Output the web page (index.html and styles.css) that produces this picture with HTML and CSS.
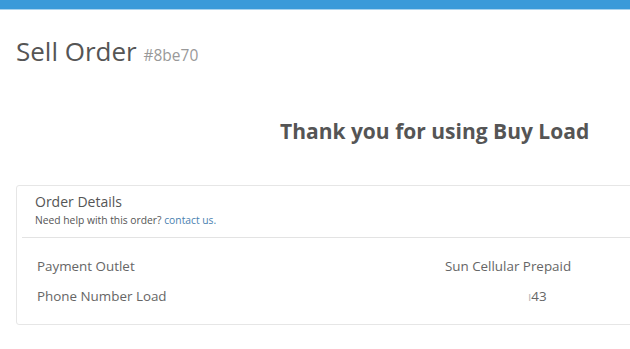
FILE: index.html
```html
<!DOCTYPE html>
<html>
<head>
<meta charset="utf-8">
<link rel="stylesheet" href="styles.css">
</head>
<body>
<div class="topbar"></div>
<div class="page">
  <h1 class="title">Sell Order <small class="order-id">#8be70</small></h1>
  <h2 class="thanks">Thank you for using Buy Load</h2>
  <div class="card">
    <div class="card-head">
      <div class="card-title">Order Details</div>
      <div class="card-sub">Need help with this order? <a class="link" href="#">contact us.</a></div>
    </div>
    <div class="card-body">
      <div class="row"><span class="label">Payment Outlet</span><span class="value">Sun Cellular Prepaid</span></div>
      <div class="row"><span class="label">Phone Number Load</span><span class="value"><span class="redact">0922xxxx</span><span class="partial">ı</span>43</span></div>
    </div>
  </div>
</div>
</body>
</html>
```
FILE: styles.css
```css
html, body { margin: 0; padding: 0; background: #fff; }
body { font-family: "Open Sans", "Liberation Sans", sans-serif; color: #555; width: 630px; height: 349px; overflow: hidden; }
.topbar { height: 9px; background: #3a9ad9; border-bottom: 1px solid #a9d3ee; }
.page { padding: 0 0 0 16px; overflow: hidden; }
.title { margin: 23px 0 0 0; font-size: 26px; font-weight: 400; line-height: 36px; color: #555; }
.order-id { font-size: 15.5px; color: #999; font-weight: 400; }
.thanks { margin: 44px 0 0 0; font-size: 21px; font-weight: 700; color: #555; line-height: 28px; padding-left: 264px; white-space: nowrap; }
.card { margin-top: 40px; border: 1px solid #e6e6e6; border-radius: 3px; width: 720px; height: 140px; box-sizing: border-box; }
.card-head { margin-left: 5px; padding: 6px 0 9px 13px; border-bottom: 1px solid #e3e3e3; }
.card-title { font-size: 14px; line-height: 20px; color: #555; }
.card-sub { font-size: 10.3px; line-height: 16px; color: #555; }
.link { color: #4a7fb0; text-decoration: none; }
.card-body { padding: 13px 0 0 20px; }
.row { display: flex; font-size: 13.4px; line-height: 30px; color: #666; }
.label { width: 371px; flex: none; }
.value { width: 200px; flex: none; text-align: center; }
.redact { color: #fff; }
.partial { color: #bbb; }
```
